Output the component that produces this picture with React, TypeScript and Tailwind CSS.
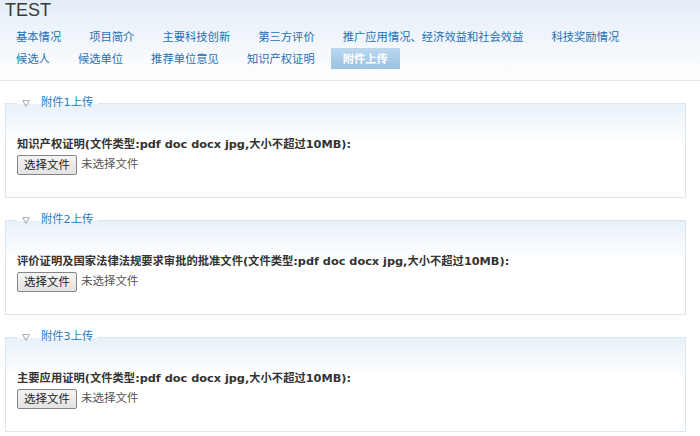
const tabsRow1 = ['基本情况', '项目简介', '主要科技创新', '第三方评价', '推广应用情况、经济效益和社会效益', '科技奖励情况'];
const tabsRow2 = ['候选人', '候选单位', '推荐单位意见', '知识产权证明', '附件上传'];

const uploads = [
  { title: '附件1上传', label: '知识产权证明(文件类型:pdf doc docx jpg,大小不超过10MB):' },
  { title: '附件2上传', label: '评价证明及国家法律法规要求审批的批准文件(文件类型:pdf doc docx jpg,大小不超过10MB):' },
  { title: '附件3上传', label: '主要应用证明(文件类型:pdf doc docx jpg,大小不超过10MB):' },
];

const ACTIVE = '附件上传';

function Tab({ name }: { name: string }) {
  const active = name === ACTIVE;
  return (
    <div
      className={
        active
          ? 'h-[21px] mt-[1px] leading-[21px] px-[12px] mr-[4px] bg-gradient-to-b from-[#bcd8ee] to-[#99c1e2] text-white font-bold whitespace-nowrap'
          : 'h-[22px] leading-[22px] px-[12px] mr-[4px] text-[#2570b5] whitespace-nowrap'
      }
    >
      {name}
    </div>
  );
}

function UploadBox({ title, label }: { title: string; label: string }) {
  return (
    <fieldset className="border border-[#dbe5ee] bg-[linear-gradient(to_bottom,#e8f1f9,#ffffff_40px)]">
      <legend className="ml-[11px] px-[5px] flex items-center h-[20px]">
        <svg width="8" height="7" viewBox="0 0 8 7" className="mr-[11px]">
          <path d="M0.6 0.6 H7.4 L4 6.4 Z" fill="none" stroke="#a8a8a8" strokeWidth="1" />
        </svg>
        <span className="text-[11.3px] text-[#2b7bbf]">{title}</span>
      </legend>
      <div className="pl-[11px] pt-[24px] pb-[22px]">
        <div className="text-[11.3px] leading-[16px] font-bold text-[#333]">{label}</div>
        <div className="flex items-center mt-[2px]">
          <button className="w-[60px] h-[20px] border border-[#858585] rounded-[2px] bg-gradient-to-b from-[#f4f4f4] to-[#e3e3e3] text-[11.5px] text-[#222] leading-[18px]">
            选择文件
          </button>
          <span className="ml-[4px] text-[11.5px] text-[#555]">未选择文件</span>
        </div>
      </div>
    </fieldset>
  );
}

export default function App() {
  return (
    <div className="w-[700px] h-[436px] overflow-hidden bg-white font-['DejaVu_Sans','Noto_Sans_CJK_SC',sans-serif]">
      <div className="h-[81px] border-b border-[#e6e9ec] bg-gradient-to-b from-[#e3edf7] to-white">
        <div className="pl-[5px] text-[18px] leading-[20px] text-[#3a3a3a] font-['Liberation_Sans',sans-serif]">TEST</div>
        <div className="mt-[5px] px-[4px] text-[11.3px] font-['Noto_Sans_CJK_SC',sans-serif]">
          <div className="flex">
            {tabsRow1.map((t) => (
              <Tab key={t} name={t} />
            ))}
          </div>
          <div className="flex">
            {tabsRow2.map((t) => (
              <Tab key={t} name={t} />
            ))}
          </div>
        </div>
      </div>

      <div className="ml-[5px] mr-[14px] mt-[12px] flex flex-col gap-[12px]">
        {uploads.map((u) => (
          <UploadBox key={u.title} title={u.title} label={u.label} />
        ))}
      </div>
    </div>
  );
}
